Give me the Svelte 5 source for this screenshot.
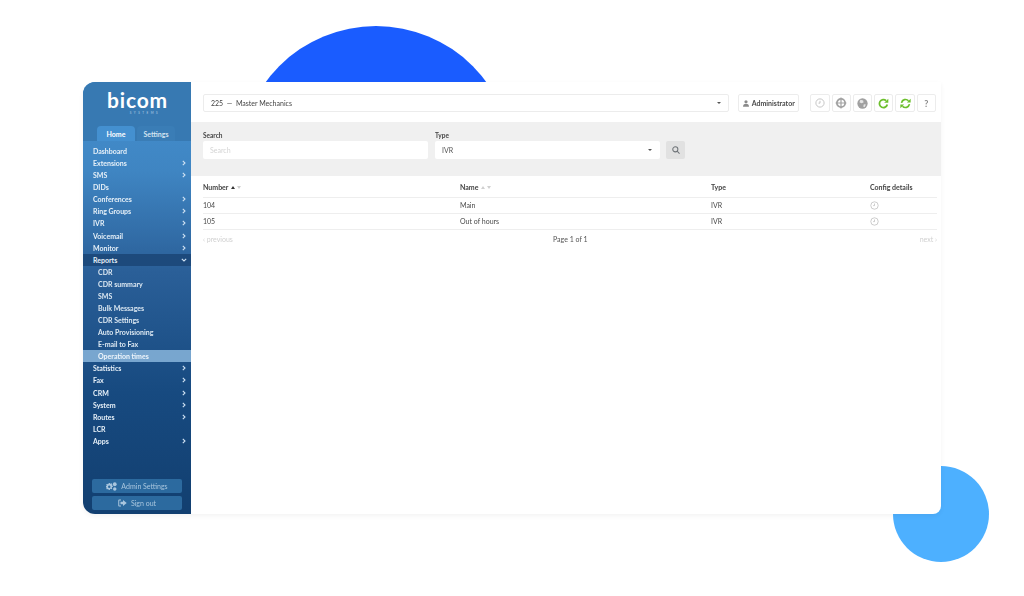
<script>
  const menuTop = [
    { label: "Dashboard" },
    { label: "Extensions", more: true },
    { label: "SMS", more: true },
    { label: "DIDs" },
    { label: "Conferences", more: true },
    { label: "Ring Groups", more: true },
    { label: "IVR", more: true },
    { label: "Voicemail", more: true },
    { label: "Monitor", more: true },
  ];
  const reports = ["CDR", "CDR summary", "SMS", "Bulk Messages", "CDR Settings", "Auto Provisioning", "E-mail to Fax", "Operation times"];
  const menuBottom = [
    { label: "Statistics", more: true },
    { label: "Fax", more: true },
    { label: "CRM", more: true },
    { label: "System", more: true },
    { label: "Routes", more: true },
    { label: "LCR" },
    { label: "Apps", more: true },
  ];
  const rows = [
    { number: "104", name: "Main", type: "IVR" },
    { number: "105", name: "Out of hours", type: "IVR" },
  ];
</script>

{#snippet clock(size)}
  <svg width={size} height={size} viewBox="0 0 16 16" fill="none" stroke="#b4b4b4" stroke-width="1.2">
    <circle cx="8" cy="8" r="6.6" />
    <path d="M8 4.5V8.2H5.6" />
  </svg>
{/snippet}

{#snippet chevron()}
  <svg class="chev" width="4" height="6" viewBox="0 0 4 6" fill="none" stroke="#cfe2f3" stroke-width="1.1">
    <path d="M.8.8 3 3 .8 5.2" />
  </svg>
{/snippet}

{#snippet sortArrows(active)}
  <span class="sort">
    <i class="up" class:active></i>
    <i class="down"></i>
  </span>
{/snippet}

<div class="page">
  <div class="blob-top"></div>
  <div class="blob-bottom"></div>

  <div class="window">
    <aside class="sidebar">
      <div class="brand">
        <div class="logo">bicom</div>
        <div class="logo-sub">SYSTEMS</div>
      </div>
      <div class="tabs">
        <div class="tab on">Home</div>
        <div class="tab">Settings</div>
      </div>
      <nav class="menu">
        {#each menuTop as item}
          <div class="item">{item.label}{#if item.more}{@render chevron()}{/if}</div>
        {/each}
        <div class="item open">
          Reports
          <svg class="chev" width="6" height="4" viewBox="0 0 6 4" fill="none" stroke="#cfe2f3" stroke-width="1.1">
            <path d="M.8.8 3 3 5.2.8" />
          </svg>
        </div>
        {#each reports as sub, i}
          <div class="item sub" class:current={i === reports.length - 1}>{sub}</div>
        {/each}
        {#each menuBottom as item}
          <div class="item">{item.label}{#if item.more}{@render chevron()}{/if}</div>
        {/each}
      </nav>
      <div class="side-actions">
        <div class="side-btn">
          <svg width="11" height="9" viewBox="0 0 22 18" fill="#a9c6de">
            <path d="M8 3l1.6.5 1.3-1 1.7 1.7-1 1.3.5 1.6 1.6.3v2.400l-1.6.3-.5 1.6 1 1.3-1.7 1.7-1.3-1-1.6.5-.3 1.6H5.300L5 14.500l-1.600-.5-1.300 1-1.700-1.700 1-1.300L1 10.900-.6 10.600V8.200L1 7.900l.4-1.600-1-1.300L2.100 3.300l1.300 1L5 3.800 5.300 2.200h2.400zM6.500 7a2.400 2.400 0 100 4.800 2.400 2.400 0 000-4.800z" />
            <circle cx="17.500" cy="4.500" r="3.800" />
            <circle cx="17.500" cy="13.800" r="3.500" />
          </svg>
          Admin Settings
        </div>
        <div class="side-btn">
          <svg width="9" height="8" viewBox="0 0 18 16" fill="#a9c6de">
            <path d="M6 1H2.500A2 2 0 00.5 3v10a2 2 0 002 2H6v-2H2.500V3H6z" />
            <path d="M10 2l7.500 6-7.500 6v-3.500H5v-5h5z" />
          </svg>
          Sign out
        </div>
      </div>
    </aside>

    <main class="content">
      <header class="topbar">
        <div class="box tenant">
          <span>225 &nbsp;—&nbsp; Master Mechanics</span>
          <i class="caret"></i>
        </div>
        <div class="box admin">
          <svg width="6" height="7" viewBox="0 0 12 14" fill="#8a8a8a">
            <circle cx="6" cy="3.500" r="3.200" />
            <path d="M0 13.500c0-4 2-6 6-6s6 2 6 6z" />
          </svg>
          Administrator
        </div>
        <div class="icons">
          <div class="box icon">{@render clock(10)}</div>
          <div class="box icon">
            <svg width="12" height="12" viewBox="0 0 16 16" fill="none" stroke="#a2a2a2">
              <circle cx="8" cy="8" r="5.500" stroke-width="2.400" />
              <path d="M8 .8v14.400M.8 8h14.400" stroke-width="1.600" />
            </svg>
          </div>
          <div class="box icon">
            <svg width="11" height="11" viewBox="0 0 16 16">
              <circle cx="8" cy="8" r="7.500" fill="#a0a0a0" />
              <path d="M5 2.500l4 1 .5 3-3 1-3-1.500zM10 9l3 .5-2 4-2-1z" fill="#e4e4e4" />
            </svg>
          </div>
          <div class="box icon">
            <svg width="11" height="11" viewBox="0 0 16 16" fill="none" stroke="#6cbf2c" stroke-width="2.600">
              <path d="M13.500 9.500A5.800 5.800 0 1111.800 3.800" />
              <path d="M15 1v6H9z" fill="#6cbf2c" stroke="none" />
            </svg>
          </div>
          <div class="box icon">
            <svg width="11" height="11" viewBox="0 0 16 16" fill="none" stroke="#6cbf2c" stroke-width="2.400">
              <path d="M2.200 7a6 6 0 0110.200-3" />
              <path d="M13.800 9a6 6 0 01-10.200 3" />
              <path d="M15.500 1v5.500H10zM.5 15V9.500H6z" fill="#6cbf2c" stroke="none" />
            </svg>
          </div>
          <div class="box icon help">?</div>
        </div>
      </header>

      <section class="filters">
        <div class="field search">
          <div class="field-label">Search</div>
          <div class="input placeholder">Search</div>
        </div>
        <div class="field type">
          <div class="field-label">Type</div>
          <div class="input">IVR<i class="caret"></i></div>
        </div>
        <div class="go">
          <svg width="8" height="8" viewBox="0 0 14 14" fill="none" stroke="#6f7478" stroke-width="1.800">
            <circle cx="5.800" cy="5.800" r="4.500" />
            <path d="M9 9l4.200 4.200" />
          </svg>
        </div>
      </section>

      <section class="table">
        <div class="row head">
          <div>Number {@render sortArrows(true)}</div>
          <div>Name {@render sortArrows(false)}</div>
          <div>Type</div>
          <div>Config details</div>
        </div>
        {#each rows as row}
          <div class="row">
            <div>{row.number}</div>
            <div>{row.name}</div>
            <div>{row.type}</div>
            <div class="cfg">{@render clock(9)}</div>
          </div>
        {/each}
        <div class="pager">
          <span class="muted">‹ previous</span>
          <span class="count">Page 1 of 1</span>
          <span class="muted">next ›</span>
        </div>
      </section>
    </main>
  </div>
</div>

<style>
  :global(body) {
    margin: 0;
    background: #fff;
    font-family: Lato, "Open Sans", sans-serif;
    overflow: hidden;
  }

  .page {
    position: relative;
    width: 1024px;
    height: 596px;
    padding: 82px 83px 0;
    box-sizing: border-box;
    overflow: hidden;
  }

  .blob-top {
    position: absolute;
    left: 239px;
    top: 26px;
    width: 274px;
    height: 274px;
    border-radius: 50%;
    background: #1a5cff;
  }

  .blob-bottom {
    position: absolute;
    left: 893px;
    top: 466px;
    width: 96px;
    height: 96px;
    border-radius: 50%;
    background: #4db0ff;
  }

  .window {
    position: relative;
    display: flex;
    width: 858px;
    height: 432px;
    background: #fff;
    border-radius: 12px 0 8px 12px;
    box-shadow: 0 2px 5px rgba(0, 0, 0, 0.05);
    overflow: hidden;
    /* the reference is a scaled-down screenshot, slightly soft */
    filter: blur(0.35px);
  }

  .sidebar {
    width: 108px;
    flex: none;
    display: flex;
    flex-direction: column;
    background: linear-gradient(180deg, #4490d0 0, #3f85c2 90px, #2a5f98 190px, #174a80 310px, #123f70 432px);
    color: #e6f0f8;
  }

  .brand {
    height: 44px;
    box-sizing: border-box;
    padding-top: 7px;
    text-align: center;
    background: #3779b2;
    color: #fff;
  }

  .logo {
    font-size: 21px;
    line-height: 22px;
    font-weight: 700;
    letter-spacing: 0.8px;
    margin-left: 1px;
  }

  .logo-sub {
    font-size: 3px;
    line-height: 4px;
    letter-spacing: 2.500px;
    color: #b9d3e8;
    margin-left: 16px;
  }

  .tabs {
    display: flex;
    gap: 2px;
    padding-left: 14px;
    background: #3779b2;
    height: 15px;
  }

  .tab {
    width: 38px;
    font-size: 7px;
    font-weight: 700;
    line-height: 16px;
    text-align: center;
    border-radius: 4px 4px 0 0;
    background: #3a7db6;
    color: #d3e3f0;
  }

  .tab.on {
    background: #4490d0;
    color: #fff;
  }

  .menu {
    padding-top: 4px;
  }

  .item {
    position: relative;
    height: 12.080px;
    line-height: 12px;
    padding-left: 10px;
    font-size: 7px;
    font-weight: 700;
  }

  .item.open {
    background: #1d4a7c;
  }

  .item.sub {
    padding-left: 15px;
    color: #dce8f2;
  }

  .item.current {
    background: #78a6cf;
    color: #eef5fb;
  }

  .chev {
    position: absolute;
    right: 5px;
    top: 3px;
  }

  .item.open .chev {
    top: 4px;
    right: 4px;
  }

  .side-actions {
    margin-top: auto;
    padding: 0 9px 4px;
    display: flex;
    flex-direction: column;
    gap: 3px;
  }

  .side-btn {
    height: 14px;
    display: flex;
    align-items: center;
    justify-content: center;
    gap: 4px;
    font-size: 7px;
    color: #a9c6de;
    background: #2c6a9f;
    border-radius: 2px;
  }

  .content {
    flex: 1;
    min-width: 0;
    font-size: 7px;
    color: #3a3a3a;
  }

  .topbar {
    display: flex;
    align-items: flex-start;
    padding: 12px 5px 0 12px;
    height: 40px;
    box-sizing: border-box;
  }

  .box {
    height: 18px;
    box-sizing: border-box;
    display: flex;
    align-items: center;
    background: #fff;
    border: 1px solid #ececec;
    border-radius: 2px;
  }

  .tenant {
    width: 526px;
    padding: 0 7px;
    justify-content: space-between;
    color: #444;
  }

  .caret {
    display: block;
    width: 0;
    height: 0;
    border: 2px solid transparent;
    border-top: 2.500px solid #555;
    border-bottom: 0;
  }

  .admin {
    width: 61px;
    margin-left: 9.500px;
    justify-content: center;
    gap: 3px;
    font-weight: 700;
    color: #4a4a4a;
  }

  .icons {
    display: flex;
    gap: 2px;
    margin-left: 11px;
  }

  .icon {
    width: 19.300px;
    justify-content: center;
  }

  .help {
    font-size: 9px;
    font-weight: 700;
    color: #8a8a8a;
  }

  .filters {
    height: 54px;
    box-sizing: border-box;
    padding: 9px 0 0 12px;
    display: flex;
    align-items: flex-start;
    background: #f0f0f0;
  }

  .field-label {
    height: 10px;
    line-height: 9px;
    font-size: 6.500px;
    font-weight: 700;
    color: #444;
  }

  .input {
    height: 18px;
    box-sizing: border-box;
    padding: 0 7px;
    display: flex;
    align-items: center;
    justify-content: space-between;
    background: #fff;
    border-radius: 2px;
    color: #555;
  }

  .placeholder {
    color: #d4d4d4;
  }

  .search {
    width: 225px;
  }

  .type {
    width: 225px;
    margin-left: 7px;
  }

  .type .input {
    padding-right: 8px;
  }

  .go {
    width: 19px;
    height: 18px;
    margin: 10px 0 0 6px;
    display: flex;
    align-items: center;
    justify-content: center;
    background: #e1e1e1;
    border-radius: 2px;
  }

  .table {
    padding: 0 4px 0 12px;
  }

  .row {
    display: grid;
    grid-template-columns: 257px 251px 159px 1fr;
    height: 16px;
    line-height: 15px;
    align-items: center;
    border-bottom: 1px solid #eeeeee;
    box-sizing: border-box;
    color: #4a4a4a;
  }

  .row.head {
    height: 21.500px;
    font-weight: 700;
    color: #444;
    padding-top: 3px;
  }

  .cfg {
    display: flex;
    padding-left: 0;
  }

  .sort {
    display: inline-flex;
    gap: 2px;
    align-items: center;
    margin-left: 1px;
    vertical-align: 1px;
  }

  .sort i {
    display: block;
    width: 0;
    height: 0;
    border: 2.500px solid transparent;
  }

  .sort .up {
    border-top: 0;
    border-bottom: 3px solid #d0d0d0;
  }

  .sort .up.active {
    border-bottom-color: #333;
  }

  .sort .down {
    border-bottom: 0;
    border-top: 3px solid #d0d0d0;
  }

  .pager {
    position: relative;
    display: flex;
    justify-content: space-between;
    height: 19px;
    line-height: 18px;
    color: #555;
  }

  .muted {
    color: #d0d0d0;
  }

  .count {
    position: absolute;
    left: 350px;
  }
</style>
